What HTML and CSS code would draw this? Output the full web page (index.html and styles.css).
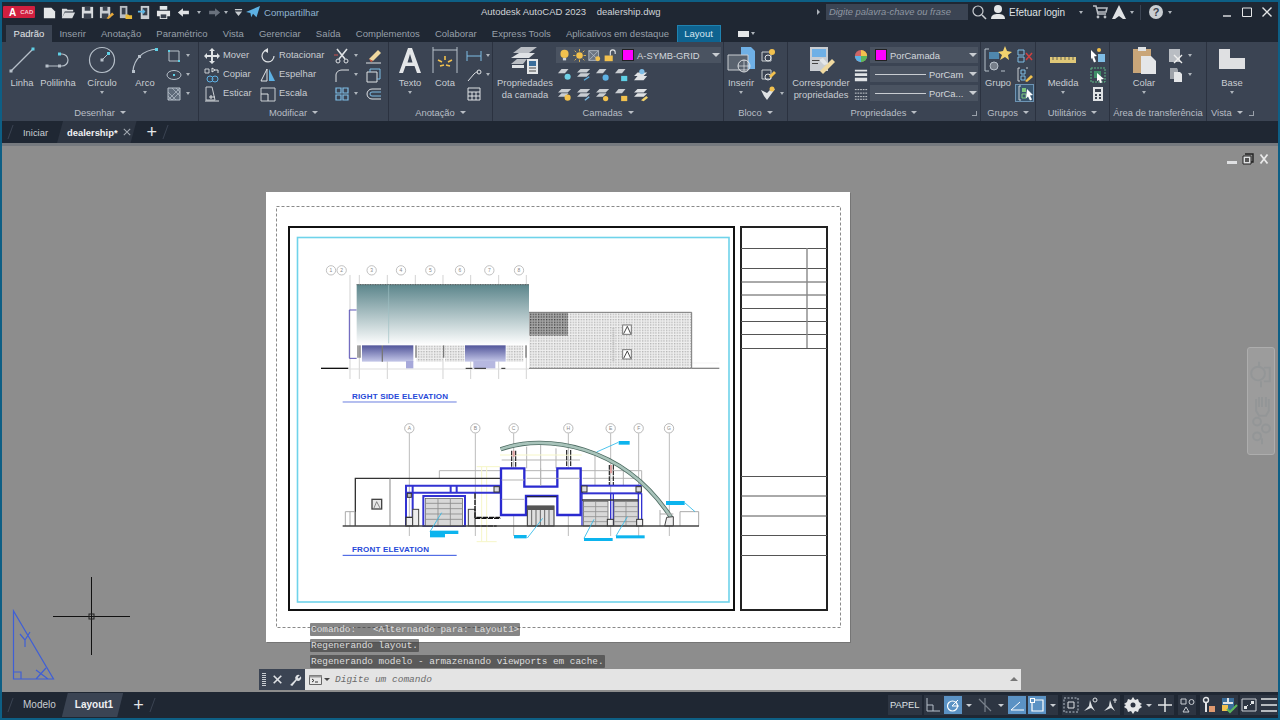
FILE: index.html
```html
<!DOCTYPE html>
<html lang="pt-BR">
<head>
    <meta charset="UTF-8">
    <title>Autodesk AutoCAD 2023 - dealership.dwg</title>
    <link rel="stylesheet" href="styles.css">
</head>
<body>
<div class="app">
    <!-- barra de titulo -->
    <div class="titlebar">
        <div class="logo"><b>A</b><span>CAD</span></div>
        <div class="quick">
            <svg class="ic" viewBox="0 0 16 16"><path d="M2 3h8l4 4v7H2z" fill="#e4e6e8"/></svg>
            <svg class="ic" viewBox="0 0 16 16"><path d="M1 4h5l1 1h6v2H4l-3 7zM4 8h11l-3 6H1z" fill="#d9dcdf"/></svg>
            <svg class="ic" viewBox="0 0 16 16"><path d="M2 2h12v12H2z" fill="#d9dcdf"/><path d="M5 2h6v4H5zM4 9h8v5H4z" fill="#39414e"/></svg>
            <svg class="ic" viewBox="0 0 16 16"><path d="M1 2h11v12H1z" fill="#c9cdd2"/><path d="M4 2h5v4H4zM3 9h7v5H3z" fill="#39414e"/><path d="M8 14l6-6 2 2-6 5z" fill="#e8a93a"/></svg>
            <svg class="ic" viewBox="0 0 16 16"><path d="M2 1h8v13H2z" fill="#b9bdc3"/><path d="M4 3h4v7H4z" fill="#39414e"/><path d="M8 10h3l1 1h3v4H8z" fill="#e8b93a"/></svg>
            <svg class="ic" viewBox="0 0 16 16"><path d="M4 1h9v14H4z" fill="#c9cdd2"/><path d="M6 3h5v8H6z" fill="#39414e"/><path d="M1 6h5V4l3 3-3 3V8H1z" fill="#5db7e6"/></svg>
            <svg class="ic" viewBox="0 0 16 16"><path d="M4 1h8v4H4zM1 6h14v6h-3v3H4v-3H1z" fill="#e4e6e8"/><path d="M5 10h6v4H5z" fill="#39414e"/></svg>
            <svg class="ic-wide" viewBox="0 0 20 12"><path d="M1 6l6-5v3h7v4H7v3z" fill="#dfe2e5"/></svg>
            <span class="dot"></span>
            <svg class="ic-wide dim" viewBox="0 0 20 12"><path d="M19 6l-6-5v3H6v4h7v3z" fill="#69717d"/></svg>
            <span class="dot"></span>
            <svg class="ic-tiny" viewBox="0 0 10 10"><path d="M1 1h8v1.6H1zM1 4h8L5 9z" fill="#c9cdd2"/></svg>
            <svg class="ic share" viewBox="0 0 16 16"><path d="M0 8L16 1l-4 13-4-4-2 4-1-5z" fill="#5db1e4"/></svg>
            <span class="share-text">Compartilhar</span>
        </div>
        <div class="app-title">Autodesk AutoCAD 2023 &nbsp;&nbsp; dealership.dwg</div>
        <div class="search-wrap">
            <span class="tri-right"></span>
            <div class="search">Digite palavra-chave ou frase</div>
            <svg class="ic" viewBox="0 0 16 16"><circle cx="7" cy="7" r="5" fill="none" stroke="#c9cdd2" stroke-width="1.2"/><path d="M11 11l4 4" stroke="#c9cdd2" stroke-width="1.6"/></svg>
            <svg class="ic user" viewBox="0 0 16 16"><circle cx="8" cy="5" r="4" fill="#e4e6e8"/><path d="M1 15c0-4 3-5 7-5s7 1 7 5z" fill="#e4e6e8"/></svg>
            <span class="login">Efetuar login</span>
            <span class="dot login-caret"></span>
            <svg class="ic cart" viewBox="0 0 16 16"><path d="M1 2h3l2 8h8M5 4h10l-1 4H6" fill="none" stroke="#b9bdc3" stroke-width="1.6"/><circle cx="6" cy="13" r="1.4" fill="#b9bdc3"/><circle cx="13" cy="13" r="1.4" fill="#b9bdc3"/></svg>
            <svg class="ic a360" viewBox="0 0 16 16"><path d="M8 1l7 14h-3l-4-3-4 3H1z" fill="#dfe2e5"/></svg>
            <span class="dot"></span>
            <span class="vsep"></span>
            <svg class="ic help" viewBox="0 0 16 16"><circle cx="8" cy="8" r="7" fill="#c9cdd2"/><text x="8" y="12" text-anchor="middle" font-size="11" font-weight="700" fill="#39414e">?</text></svg>
            <span class="dot"></span>
        </div>
        <div class="win-btns">
            <svg viewBox="0 0 12 12"><path d="M2 10h8" stroke="#e4e6e8" stroke-width="1.4"/></svg>
            <svg viewBox="0 0 12 12"><path d="M1.5 2h9v8.5h-9z" fill="none" stroke="#e4e6e8" stroke-width="1"/></svg>
            <svg viewBox="0 0 12 12"><path d="M1.5 1.5l9 9M10.5 1.5l-9 9" stroke="#e4e6e8" stroke-width="1.4"/></svg>
        </div>
    </div>

    <!-- abas da faixa de opcoes -->
    <div class="tabs">
        <div class="tab active">Padrão</div>
        <div class="tab">Inserir</div>
        <div class="tab">Anotação</div>
        <div class="tab">Paramétrico</div>
        <div class="tab">Vista</div>
        <div class="tab">Gerenciar</div>
        <div class="tab">Saída</div>
        <div class="tab">Complementos</div>
        <div class="tab">Colaborar</div>
        <div class="tab">Express Tools</div>
        <div class="tab">Aplicativos em destaque</div>
        <div class="tab contextual">Layout</div>
        <div class="tab-extra"><span></span><i class="dot"></i></div>
    </div>

    <!-- faixa de opcoes -->
    <div class="ribbon">
        <section class="panel p-draw">
            <div class="panel-body">
                <div class="big w36">
                    <svg class="big-ic" viewBox="0 0 28 28"><path d="M3 25L25 3" stroke="#b7c0ca" stroke-width="1.2"/><rect x="1.5" y="23.5" width="3" height="3" fill="#b7c0ca"/><rect x="23.5" y="1.5" width="3" height="3" fill="#5fd0e6"/></svg>
                    <span>Linha</span>
                </div>
                <div class="big w36">
                    <svg class="big-ic" viewBox="0 0 28 28"><path d="M3 20h15a6 6 0 0 0 0-12h-2" fill="none" stroke="#b7c0ca" stroke-width="1.2"/><rect x="1.5" y="18.5" width="3" height="3" fill="#b7c0ca"/><rect x="14" y="18.5" width="3" height="3" fill="#b7c0ca"/><rect x="14" y="6.5" width="3" height="3" fill="#5fd0e6"/></svg>
                    <span>Polilinha</span>
                </div>
                <div class="big w52">
                    <svg class="big-ic" viewBox="0 0 28 28"><circle cx="14" cy="14" r="12.5" fill="none" stroke="#b7c0ca" stroke-width="1.2"/><path d="M14 14l6-6" stroke="#b7c0ca"/><rect x="12.5" y="12.5" width="3" height="3" fill="#b7c0ca"/><rect x="19" y="6" width="3" height="3" fill="#5fd0e6"/></svg>
                    <span>Círculo</span><i class="dot"></i>
                </div>
                <div class="big w34">
                    <svg class="big-ic" viewBox="0 0 28 28"><path d="M2 25C3 13 12 4 26 3" fill="none" stroke="#b7c0ca" stroke-width="1.2"/><rect x="1" y="24" width="3" height="3" fill="#b7c0ca"/><rect x="7" y="9" width="3" height="3" fill="#b7c0ca"/><rect x="24" y="2" width="3" height="3" fill="#5fd0e6"/></svg>
                    <span>Arco</span><i class="dot"></i>
                </div>
                <div class="col col-draw">
                    <div class="small"><svg class="ic" viewBox="0 0 16 16"><path d="M3 3h10v10H3z" fill="none" stroke="#b7c0ca"/><path d="M2 2h2v2H2zM12 12h2v2h-2z" fill="#5fd0e6"/></svg><i class="dot"></i></div>
                    <div class="small"><svg class="ic" viewBox="0 0 16 16"><ellipse cx="8" cy="8" rx="7" ry="4.5" fill="none" stroke="#b7c0ca"/><path d="M7 7h2v2H7z" fill="#5fd0e6"/></svg><i class="dot"></i></div>
                    <div class="small"><svg class="ic" viewBox="0 0 16 16"><path d="M2 2h12v12H2z" fill="#5f6b7a" stroke="#b7c0ca"/><path d="M2 6l8 8M2 10l4 4M6 2l8 8M10 2l4 4M14 6l-8 8M14 2L2 14" stroke="#b7c0ca" stroke-width=".7"/></svg><i class="dot"></i></div>
                </div>
            </div>
            <div class="panel-foot">Desenhar <i class="caret"></i></div>
        </section>

        <section class="panel p-mod">
            <div class="panel-body">
                <div class="col col-mover">
                    <div class="small"><svg class="ic" viewBox="0 0 16 16"><path d="M8 0l3 3H9v4h4V5l3 3-3 3V9H9v4h2l-3 3-3-3h2V9H3v2L0 8l3-3v2h4V3H5z" fill="#dfe2e5"/></svg><span>Mover</span></div>
                    <div class="small"><svg class="ic" viewBox="0 0 16 16"><path d="M1 2h4v4H1z" fill="none" stroke="#c9cdd2"/><path d="M8 1l3 2-3 2zM11 3h3v3" fill="none" stroke="#dfe2e5"/><circle cx="6" cy="12" r="3" fill="none" stroke="#5db1e4"/><circle cx="11" cy="12" r="3" fill="none" stroke="#5db1e4"/></svg><span>Copiar</span></div>
                    <div class="small"><svg class="ic" viewBox="0 0 16 16"><path d="M2 1h6l3 13H2z" fill="none" stroke="#c9cdd2"/><path d="M1 15h14M7 9v4M5 11h6" stroke="#dfe2e5"/></svg><span>Esticar</span></div>
                </div>
                <div class="col col-rot">
                    <div class="small"><svg class="ic" viewBox="0 0 16 16"><path d="M7 2A6 6 0 1 0 14 8" fill="none" stroke="#dfe2e5" stroke-width="1.2"/><path d="M8 0v5L4 2.5z" fill="#dfe2e5"/></svg><span>Rotacionar</span></div>
                    <div class="small"><svg class="ic" viewBox="0 0 16 16"><path d="M7 2L1 14h6z" fill="none" stroke="#dfe2e5"/><path d="M9 2l6 12H9z" fill="#5db1e4"/></svg><span>Espelhar</span></div>
                    <div class="small"><svg class="ic" viewBox="0 0 16 16"><path d="M1 2h14v13H1z" fill="none" stroke="#c9cdd2"/><path d="M1 8h7v7" fill="none" stroke="#dfe2e5"/></svg><span>Escala</span></div>
                </div>
                <div class="col col-trim">
                    <div class="small"><svg class="ic" viewBox="0 0 16 16"><path d="M3 1l8 10M13 1L5 11" stroke="#dfe2e5" stroke-width="1.6"/><circle cx="4" cy="13" r="2" fill="none" stroke="#dfe2e5"/><circle cx="12" cy="13" r="2" fill="none" stroke="#dfe2e5"/><path d="M0 7h4" stroke="#d05050"/></svg><i class="dot"></i></div>
                    <div class="small"><svg class="ic" viewBox="0 0 16 16"><path d="M2 15V8c0-3 3-5 6-5h7" fill="none" stroke="#dfe2e5"/></svg><i class="dot"></i></div>
                    <div class="small"><svg class="ic" viewBox="0 0 16 16"><path d="M2 2h5v5H2zM9 2h5v5H9zM2 9h5v5H2zM9 9h5v5H9z" fill="none" stroke="#7fbde6" stroke-width="1.2"/></svg><i class="dot"></i></div>
                </div>
                <div class="col col-erase">
                    <div class="small"><svg class="ic" viewBox="0 0 16 16"><path d="M3 11L12 2l3 3-8 8z" fill="#f0d9a0"/><path d="M3 11l4 2-2 1z" fill="#e05a3a"/><path d="M0 15h15" stroke="#dfe2e5"/></svg></div>
                    <div class="small"><svg class="ic" viewBox="0 0 16 16"><path d="M1 5h10v10H1z" fill="none" stroke="#dfe2e5"/><path d="M4 5V2h10v10h-3" fill="none" stroke="#7fbde6"/></svg></div>
                    <div class="small"><svg class="ic" viewBox="0 0 16 16"><path d="M15 3H6a5 5 0 0 0 0 10h9" fill="none" stroke="#dfe2e5"/><path d="M15 6H6a2 2 0 0 0 0 4h9" fill="none" stroke="#7fbde6"/></svg></div>
                </div>
            </div>
            <div class="panel-foot">Modificar <i class="caret"></i></div>
        </section>

        <section class="panel p-note">
            <div class="panel-body">
                <div class="big w30 first-note">
                    <svg class="big-ic" viewBox="0 0 28 28"><path d="M12 2h4l9 25h-4l-2.5-7h-9L7 27H3zM11.5 16.500h5L14 8z" fill="#e4e6e8" fill-rule="evenodd"/></svg>
                    <span>Texto</span><i class="dot"></i>
                </div>
                <div class="big w40">
                    <svg class="big-ic" viewBox="0 0 28 28"><path d="M2 1v26M26 1v26M2 4h24" stroke="#b7c0ca" fill="none"/><path d="M7 14l4 2M9 20l4-1M21 14l-4 2M19 20l-4-1M14 10v4" stroke="#f2c14e" stroke-width="1.6"/></svg>
                    <span>Cota</span>
                </div>
                <div class="col">
                    <div class="small"><svg class="ic" viewBox="0 0 16 16"><path d="M1 3v10M15 3v10M1 8h14" stroke="#7fbde6"/></svg><i class="dot"></i></div>
                    <div class="small"><svg class="ic" viewBox="0 0 16 16"><path d="M2 14L8 7c2-2 3-2 4-2" fill="none" stroke="#dfe2e5"/><circle cx="13" cy="5" r="2" fill="none" stroke="#dfe2e5"/></svg><i class="dot"></i></div>
                    <div class="small"><svg class="ic" viewBox="0 0 16 16"><path d="M2 2h12v12H2zM2 6h12M2 10h12M6 6v8M10 6v8" fill="none" stroke="#dfe2e5"/></svg></div>
                </div>
            </div>
            <div class="panel-foot">Anotação <i class="caret"></i></div>
        </section>

        <section class="panel p-layer">
            <div class="panel-body">
                <div class="big w60">
                    <svg class="big-ic" viewBox="0 0 28 28"><path d="M10 1h16l-8 6H2z" fill="#b9bdc3"/><path d="M8 7h16l-6 5H0z" fill="#dfe2e5"/><path d="M6 13h10l-4 5H0z" fill="#b9bdc3"/><path d="M1 19h12v3H1z" fill="#dfe2e5"/><path d="M16 13h11v15H16z" fill="#e4e6e8"/><path d="M18 15h7v5h-7z" fill="#3a6d9a"/><path d="M18 22h7M18 25h7" stroke="#444"/></svg>
                    <span>Propriedades</span><span>da camada</span>
                </div>
                <div class="layers">
                    <div class="combo layer-combo">
                        <svg class="ic" viewBox="0 0 16 16"><circle cx="8" cy="6" r="5" fill="#f2c14e"/><path d="M6 11h4v3H6z" fill="#cfd3d8"/></svg>
                        <svg class="ic" viewBox="0 0 16 16"><circle cx="8" cy="8" r="4" fill="#f2c14e"/><path d="M8 0v3M8 13v3M0 8h3M13 8h3M2 2l2 2M12 12l2 2M14 2l-2 2M4 12l-2 2" stroke="#f2c14e"/></svg>
                        <svg class="ic" viewBox="0 0 16 16"><path d="M1 2h12v12H1z" fill="#6b7481" stroke="#b7c0ca"/><path d="M1 2l12 12M13 2L1 14" stroke="#b7c0ca"/><circle cx="12" cy="12" r="3" fill="#f2c14e"/></svg>
                        <svg class="ic" viewBox="0 0 16 16"><path d="M2 8h10v7H2z" fill="#f2c14e"/><path d="M9 8V4a3 3 0 0 1 6 0v2" fill="none" stroke="#dfe2e5" stroke-width="1.4"/></svg>
                        <span class="swatch"></span>
                        <span class="combo-text">A-SYMB-GRID</span>
                        <i class="tri"></i>
                    </div>
                    <div class="layer-icons">
                        <svg class="ic" viewBox="0 0 16 16"><path d="M4 1h8L8 6H0z" fill="#c9cdd2"/><circle cx="11" cy="10" r="3.5" fill="#6fd0e6"/></svg>
                        <svg class="ic" viewBox="0 0 16 16"><path d="M4 1h11l-4 4H0zM4 6h11l-4 4H0z" fill="#c9cdd2"/><path d="M8 14l6-4" stroke="#5db1e4" stroke-width="1.6"/></svg>
                        <svg class="ic" viewBox="0 0 16 16"><path d="M4 1h8L8 6H0z" fill="#c9cdd2"/><circle cx="11" cy="11" r="3.5" fill="#5db1e4"/></svg>
                        <svg class="ic" viewBox="0 0 16 16"><path d="M4 1h8L8 6H0z" fill="#c9cdd2"/><path d="M7 9h7v6H7z" fill="#5fd0e6"/></svg>
                        <svg class="ic" viewBox="0 0 16 16"><path d="M4 9h11l-4 5H0zM4 5h11l-4 4H0z" fill="#dfe2e5"/><circle cx="9" cy="4" r="3" fill="#7fbde6"/></svg>
                    </div>
                    <div class="layer-icons">
                        <svg class="ic" viewBox="0 0 16 16"><path d="M4 1h11l-4 4H0zM4 6h8L8 10H0z" fill="#c9cdd2"/><circle cx="11" cy="11" r="3.5" fill="#f2c14e"/></svg>
                        <svg class="ic" viewBox="0 0 16 16"><path d="M4 1h11l-4 4H0zM4 6h11l-4 4H0z" fill="#c9cdd2"/><path d="M9 14l5-4" stroke="#7fbde6" stroke-width="1.6"/></svg>
                        <svg class="ic" viewBox="0 0 16 16"><path d="M4 1h11l-4 4H0zM4 6h8L8 10H0z" fill="#c9cdd2"/><circle cx="11" cy="12" r="3" fill="#f2c14e"/></svg>
                        <svg class="ic" viewBox="0 0 16 16"><path d="M4 1h8L8 6H0z" fill="#c9cdd2"/><path d="M7 9h7v6H7z" fill="#f2c14e"/></svg>
                        <svg class="ic" viewBox="0 0 16 16"><path d="M4 1h11l-4 4H0zM4 6h11l-4 4H0z" fill="#dfe2e5"/><path d="M8 14l6-5 2 2-5 4z" fill="#f2d36e"/></svg>
                    </div>
                </div>
            </div>
            <div class="panel-foot">Camadas <i class="caret"></i></div>
        </section>

        <section class="panel p-block">
            <div class="panel-body">
                <div class="big w34">
                    <svg class="big-ic" viewBox="0 0 28 28"><path d="M14 1h10l4 4v18H14z" fill="#6fb0e6"/><path d="M1 9h20v15H1z" fill="#5a636f" stroke="#c9cdd2"/><circle cx="17" cy="20" r="6" fill="none" stroke="#dfe2e5"/><path d="M17 14v12M11 20h12" stroke="#dfe2e5" stroke-width=".7"/></svg>
                    <span>Inserir</span><i class="dot"></i>
                </div>
                <div class="col">
                    <div class="small"><svg class="ic" viewBox="0 0 16 16"><path d="M2 4h9v9H2z" fill="none" stroke="#c9cdd2"/><circle cx="8" cy="10" r="3" fill="none" stroke="#dfe2e5"/><circle cx="12" cy="4" r="3" fill="#f2c14e"/></svg></div>
                    <div class="small"><svg class="ic" viewBox="0 0 16 16"><path d="M2 3h9v9H2z" fill="none" stroke="#c9cdd2"/><circle cx="8" cy="10" r="3" fill="none" stroke="#dfe2e5"/><path d="M9 9l5-5 2 2-5 5z" fill="#f2c14e"/></svg></div>
                    <div class="small"><svg class="ic" viewBox="0 0 16 16"><path d="M1 4l3 6 3 4 8-11-5 1-3 3z" fill="#dfe2e5"/><circle cx="12" cy="3" r="2.5" fill="#f2c14e"/></svg><i class="dot"></i></div>
                </div>
            </div>
            <div class="panel-foot">Bloco <i class="caret"></i></div>
        </section>

        <section class="panel p-props">
            <div class="panel-body">
                <div class="big w58">
                    <svg class="big-ic" viewBox="0 0 28 28"><path d="M3 1h18v24H3z" fill="#c9cdd2"/><path d="M5 3h14v8H5z" fill="#6fb0e6"/><path d="M5 14h8v1H5zM5 17h6v1H5z" fill="#444"/><path d="M13 25l12-12 3 3-12 12z" fill="#f0d9a0"/><path d="M12 14l5 5 4-1-5-6z" fill="#e4e6e8"/></svg>
                    <span>Corresponder</span><span>propriedades</span>
                </div>
                <div class="col col-prop-ic">
                    <div class="small"><svg class="ic" viewBox="0 0 16 16"><circle cx="8" cy="8" r="7" fill="#c66"/><path d="M8 8V1a7 7 0 0 1 7 7z" fill="#f2c14e"/><path d="M8 8h7a7 7 0 0 1-7 7z" fill="#5cb85c"/><path d="M8 8v7a7 7 0 0 1-7-7z" fill="#5db1e4"/></svg></div>
                    <div class="small"><svg class="ic" viewBox="0 0 16 16"><path d="M1 2h14v2H1zM1 6h14v3H1zM1 11h14v4H1z" fill="#dfe2e5"/></svg></div>
                    <div class="small"><svg class="ic" viewBox="0 0 16 16"><path d="M1 3h14M1 7h14M1 11h14M1 14h14" stroke="#dfe2e5" stroke-dasharray="2 1"/></svg></div>
                </div>
                <div class="prop-combos">
                    <div class="combo"><span class="swatch"></span><span class="combo-text">PorCamada</span><i class="tri"></i></div>
                    <div class="combo"><span class="line-sample"></span><span class="combo-text">PorCam</span><i class="tri"></i></div>
                    <div class="combo"><span class="line-sample"></span><span class="combo-text">PorCa...</span><i class="tri"></i></div>
                </div>
            </div>
            <div class="panel-foot">Propriedades <i class="caret"></i><em class="launch"></em></div>
        </section>

        <section class="panel p-group">
            <div class="panel-body">
                <div class="big w32">
                    <svg class="big-ic" viewBox="0 0 28 28"><path d="M5 3H1v22h4M17 25h4" fill="none" stroke="#b7c0ca"/><path d="M5 6h10v7H5z" fill="#4f87ad"/><circle cx="10" cy="20" r="4" fill="#777f8a" stroke="#b7c0ca"/><path d="M21 0l2 5 5 1-4 3 1 5-4-3-5 3 2-5-4-3 5-1z" fill="#f2d36e"/></svg>
                    <span>Grupo</span>
                </div>
                <div class="col col-group">
                    <div class="small"><svg class="ic" viewBox="0 0 16 16"><path d="M1 2h6v5H1zM1 9h6v5H1z" fill="none" stroke="#7fbde6"/><path d="M9 5l6 7M15 5l-6 7" stroke="#d04040" stroke-width="1.5"/></svg></div>
                    <div class="small"><svg class="ic" viewBox="0 0 16 16"><path d="M3 1H1v13h2M9 1h2" fill="none" stroke="#c9cdd2"/><path d="M4 3h4v4H4zM4 9h4v4H4z" fill="none" stroke="#7fbde6"/><path d="M8 14l6-6 2 2-6 5z" fill="#f2c14e"/></svg></div>
                    <div class="small picked"><svg class="ic" viewBox="0 0 16 16"><path d="M3 1H1v14h2" fill="none" stroke="#c9cdd2"/><path d="M4 3h4v4H4z" fill="#7cc47c"/><path d="M4 9h4v4H4z" fill="none" stroke="#7cc47c"/><path d="M9 4l6 6-3 .5 2 4-2 1-2-4-2 2z" fill="#fff"/></svg></div>
                </div>
            </div>
            <div class="panel-foot">Grupos <i class="caret"></i></div>
        </section>

        <section class="panel p-util">
            <div class="panel-body">
                <div class="big w52">
                    <svg class="big-ic" viewBox="0 0 28 28"><path d="M1 11h26v6H1z" fill="#e0c878"/><path d="M4 11v3M8 11v3M12 11v3M16 11v3M20 11v3M24 11v3" stroke="#665"/></svg>
                    <span>Medida</span><i class="dot"></i>
                </div>
                <div class="col col-util">
                    <div class="small"><svg class="ic" viewBox="0 0 16 16"><path d="M1 2l6 6-3 .5 2 5-2 1-2-5-1 2z" fill="#fff"/><path d="M8 6h7v8H8z" fill="#7fbde6"/><circle cx="9" cy="2" r="2" fill="#f2c14e"/></svg></div>
                    <div class="small"><svg class="ic" viewBox="0 0 16 16"><path d="M1 1h14v14H1z" fill="none" stroke="#5cb885" stroke-dasharray="2 1"/><path d="M4 4h7v7H4z" fill="#3f8f68"/><path d="M7 6l7 6-3 .5 1 3-2 .5-1-3-2 1z" fill="#fff"/></svg></div>
                    <div class="small"><svg class="ic" viewBox="0 0 16 16"><path d="M3 1h10v14H3z" fill="#dfe2e5"/><path d="M5 3h6v3H5z" fill="#39414e"/><path d="M5 8h2v2H5zM9 8h2v2H9zM5 11h2v2H5zM9 11h2v2H9z" fill="#39414e"/></svg></div>
                </div>
            </div>
            <div class="panel-foot">Utilitários <i class="caret"></i></div>
        </section>

        <section class="panel p-clip">
            <div class="panel-body">
                <div class="big w44">
                    <svg class="big-ic" viewBox="0 0 28 28"><path d="M3 3h18v24H3z" fill="#c9a679"/><path d="M8 1h8v4H8z" fill="#dfe2e5"/><path d="M11 10h10l5 5v13H11z" fill="#e4e6e8"/></svg>
                    <span>Colar</span><i class="dot"></i>
                </div>
                <div class="col col-clip">
                    <div class="small"><svg class="ic" viewBox="0 0 16 16"><path d="M1 1h11v13H1z" fill="#b9bdc3"/><path d="M6 7l8 8M14 7l-8 8" stroke="#eee" stroke-width="1.4"/></svg><i class="dot"></i></div>
                    <div class="small"><svg class="ic" viewBox="0 0 16 16"><path d="M2 1h7l1 2v9H2z" fill="#9ea3aa"/><path d="M6 5h6l2 2v8H6z" fill="#e4e6e8"/></svg><i class="dot"></i></div>
                </div>
            </div>
            <div class="panel-foot">Área de transferência</div>
        </section>

        <section class="panel p-view">
            <div class="panel-body">
                <div class="big w50">
                    <svg class="big-ic" viewBox="0 0 28 28"><path d="M1 3h11v9h15v11H1z" fill="#dfe0e2"/></svg>
                    <span>Base</span><i class="dot"></i>
                </div>
            </div>
            <div class="panel-foot view-foot">Vista <i class="caret"></i><em class="launch view-launch"></em></div>
        </section>
    </div>

    <!-- abas de arquivo -->
    <div class="filetabs">
        <span class="slash"></span>
        <span class="ftab">Iniciar</span>
        <span class="ftab current">dealership* <svg class="close-x" viewBox="0 0 10 10"><path d="M1 1l8 8M9 1L1 9" stroke="#a3a9b1" stroke-width="1.3"/></svg></span>
        <span class="plus">+</span>
        <span class="slash"></span>
    </div>

    <!-- area de desenho -->
    <div class="canvas">
        <svg class="sheet" viewBox="2 143 1276 549" width="1276" height="549" font-family="Liberation Sans, sans-serif">
            <defs>
                <linearGradient id="roof" x1="0" y1="0" x2="0" y2="1">
                    <stop offset="0" stop-color="#5b858b"/>
                    <stop offset="1" stop-color="#ffffff"/>
                </linearGradient>
                <linearGradient id="glass" x1="0" y1="0" x2="0" y2="1">
                    <stop offset="0" stop-color="#4f5398"/>
                    <stop offset="1" stop-color="#c4c7e8"/>
                </linearGradient>
                <pattern id="brick" width="8" height="8" patternUnits="userSpaceOnUse">
                    <rect width="8" height="8" fill="#eeeeee"/>
                    <rect width="4" height="4" fill="#b4b4b4"/>
                </pattern>
                <pattern id="brickdark" width="8" height="8" patternUnits="userSpaceOnUse">
                    <rect width="8" height="8" fill="#a8a8a8"/>
                    <rect width="4" height="4" fill="#444"/>
                </pattern>
            </defs>

            <rect x="2" y="143" width="1276" height="3" fill="#767a7f"/>

            <!-- folha -->
            <rect x="267" y="193" width="584" height="450" fill="#757575"/>
            <rect x="266" y="192" width="584" height="450" fill="#fff"/>
            <rect x="276.5" y="206.5" width="564" height="421" fill="none" stroke="#8a8a8a" stroke-width="1" stroke-dasharray="3 2"/>
            <rect x="289" y="227" width="445" height="383" fill="none" stroke="#111" stroke-width="2"/>
            <rect x="297.5" y="237.5" width="431.5" height="364.5" fill="none" stroke="#6fd3ea" stroke-width="1.6"/>

            <!-- carimbo -->
            <rect x="741" y="227" width="86" height="383" fill="none" stroke="#222" stroke-width="2"/>
            <g stroke="#555" stroke-width="1">
                <path d="M741 248.5h86M741 268.5h86M741 282h86M741 295h86M741 308.5h86M741 321.5h86M741 334.5h86M741 348.5h86"/>
                <path d="M741 476.5h86M741 496h86M741 516h86M741 535.5h86M741 555.5h86"/>
            </g>
            <path d="M807 248v100" stroke="#888" stroke-width="1.4"/>

            <!-- elevacao lateral, coordenadas em escala 3x -->
            <g transform="translate(290 255) scale(.33333)">
                <g fill="#fff" stroke="#b5b5b5" stroke-width="2.5">
                    <circle cx="123" cy="46" r="14"/><circle cx="155" cy="46" r="14"/><circle cx="245" cy="46" r="14"/><circle cx="333" cy="46" r="14"/>
                    <circle cx="421" cy="46" r="14"/><circle cx="510" cy="46" r="14"/><circle cx="598" cy="46" r="14"/><circle cx="687" cy="46" r="14"/>
                </g>
                <g font-size="15" fill="#888" text-anchor="middle">
                    <text x="123" y="51">1</text><text x="155" y="51">2</text><text x="245" y="51">3</text><text x="333" y="51">4</text>
                    <text x="421" y="51">5</text><text x="510" y="51">6</text><text x="598" y="51">7</text><text x="687" y="51">8</text>
                </g>
                <path d="M180 60V372M208 60V372M292 60V372M376 60V90M459 60V372M542 60V372M626 60V372M709 60V372" stroke="#bdbdbd" stroke-width="2" fill="none"/>
                <path d="M200 165H178V310H200" fill="none" stroke="#5c54b8" stroke-width="3"/>
                <path d="M93 340H175" stroke="#111" stroke-width="4"/>
                <path d="M175 342H717" stroke="#ddd" stroke-width="3"/>
                <path d="M1205 340H1288" stroke="#888" stroke-width="4"/>
                <path d="M1205 324H1288" stroke="#eee" stroke-width="2"/>
                <rect x="216" y="270" width="154" height="50" fill="url(#glass)"/>
                <rect x="348" y="318" width="22" height="22" fill="#a6a8da"/>
                <rect x="525" y="270" width="122" height="50" fill="url(#glass)"/>
                <rect x="550" y="318" width="66" height="22" fill="#b6b8e0"/>
                <rect x="380" y="270" width="78" height="50" fill="url(#brick)"/>
                <rect x="465" y="270" width="58" height="50" fill="url(#brick)"/>
                <rect x="650" y="270" width="50" height="50" fill="url(#brick)"/>
                <path d="M527 340h20M553 340h35M634 340h12" stroke="#222" stroke-width="3"/>
                <path d="M204 270v38M210 270v38M378 270v38M461 270v38M708 270v38M277 270v50" stroke="#777" stroke-width="4"/>
                <rect x="200" y="88" width="517" height="183" fill="url(#roof)"/>
                <path d="M200 89H717" stroke="#555" stroke-width="3" stroke-dasharray="3 2"/>
                <path d="M296 90V265" stroke="#9fc0c4" stroke-width="2"/>
                <rect x="717" y="172" width="488" height="168" fill="url(#brick)"/>
                <rect x="717" y="172" width="117" height="70" fill="url(#brickdark)"/>
                <path d="M717 172H1205V340M717 340H1205" fill="none" stroke="#777" stroke-width="3"/>
                <path d="M970 220V320" stroke="#bbb" stroke-width="6" stroke-dasharray="3 3"/>
                <g fill="#fff" stroke="#777" stroke-width="3">
                    <rect x="998" y="210" width="26" height="28"/><rect x="998" y="284" width="26" height="28"/>
                </g>
                <path d="M1001 236L1012 214 1022 236M1001 310L1012 288 1022 310" fill="none" stroke="#444" stroke-width="3"/>
                <path d="M158 441H500" stroke="#6a7ee0" stroke-width="3"/>
            </g>
            <text x="352" y="398.500" font-size="8" font-weight="700" fill="#2548d8" textLength="96">RIGHT SIDE ELEVATION</text>

            <!-- elevacao frontal, coordenadas em escala 3x -->
            <g transform="translate(330 410) scale(.33333)">
                <path d="M238 70V378M436 70V378M551 70V378M715 70V378M842 70V378M926 70V378M1018 70V378" stroke="#bcbcbc" stroke-width="3"/>
                <g fill="#fff" stroke="#aaa" stroke-width="2.5">
                    <circle cx="238" cy="55" r="14"/><circle cx="436" cy="55" r="14"/><circle cx="551" cy="55" r="14"/><circle cx="715" cy="55" r="14"/>
                    <circle cx="842" cy="55" r="14"/><circle cx="926" cy="55" r="14"/><circle cx="1017" cy="55" r="14"/>
                </g>
                <g font-size="15" fill="#888" text-anchor="middle">
                    <text x="238" y="60">A</text><text x="436" y="60">B</text><text x="551" y="60">C</text><text x="715" y="60">H</text>
                    <text x="842" y="60">E</text><text x="926" y="60">F</text><text x="1017" y="60">G</text>
                </g>
                <path d="M328 205V182H935V225M590 110V175M632 105V230M678 115V175M795 128V225M880 170V225M515 150H750M758 205H920" fill="none" stroke="#b5b5b5" stroke-width="3"/>
                <path d="M455 170V395M470 170V395M440 170H510M510 135H755M510 255H590M440 395H500" fill="none" stroke="#f6f6c8" stroke-width="3"/>
                <path d="M545 122V175M557 122V175M710 120V172M722 120V172M838 165V225M850 165V225" stroke="#222" stroke-width="3.5" stroke-dasharray="14 3"/>
                <path d="M551 122V140M843 165V190" stroke="#e0a0a0" stroke-width="6"/>
                <path d="M76 348V205H510" fill="none" stroke="#333" stroke-width="4"/>
                <path d="M180 205V348" stroke="#888" stroke-width="3"/>
                <rect x="126" y="268" width="29" height="29" fill="#e8e8e8" stroke="#444" stroke-width="4"/>
                <path d="M132 294L140 275 150 294" fill="none" stroke="#555" stroke-width="2"/>
                <path d="M46 348V305H75V348M60 305V348" fill="none" stroke="#aaa" stroke-width="3"/>
                <path d="M228 227H510V248H228zM228 227V348M248 227V348M362 227V248M380 227V248" fill="none" stroke="#3232d2" stroke-width="6"/>
                <rect x="232" y="250" width="12" height="12" fill="#bbb" stroke="#333" stroke-width="3"/>
                <rect x="228" y="322" width="20" height="26" fill="#eee" stroke="#333" stroke-width="4"/>
                <rect x="248" y="298" width="18" height="50" fill="#eee" stroke="#444" stroke-width="3"/>
                <rect x="415" y="298" width="20" height="50" fill="#eee" stroke="#444" stroke-width="3"/>
                <rect x="492" y="230" width="16" height="16" fill="#ddd" stroke="#333" stroke-width="3"/>
                <rect x="280" y="258" width="125" height="90" fill="none" stroke="#3232d2" stroke-width="6"/>
                <rect x="287" y="265" width="111" height="83" fill="#d8d8d8" stroke="#555" stroke-width="2"/>
                <path d="M287 280H398M287 296H398M287 312H398M287 328H398M324 265V348M361 265V348" stroke="#8a8a8a" stroke-width="2.5"/>
                <path d="M435 250V322H510M435 325H512M435 348H500" fill="none" stroke="#111" stroke-width="4" stroke-dasharray="16 3"/>
                <path d="M513 175H583V230H682V175H752V315H682V258H588V315H513Z" fill="#fff" stroke="#2a2ad0" stroke-width="7"/>
                <path d="M515 210H583M515 268H583M590 205H680M632 175V228M682 205H750" fill="none" stroke="#b5b5b5" stroke-width="3"/>
                <path d="M590 260H680" stroke="#222" stroke-width="3"/>
                <rect x="592" y="288" width="80" height="60" fill="#e0e0e0" stroke="#333" stroke-width="3"/>
                <rect x="592" y="288" width="80" height="12" fill="#555"/>
                <path d="M605 300V348M618 300V348M631 300V348M644 300V348M657 300V348" stroke="#666" stroke-width="3"/>
                <rect x="756" y="227" width="176" height="23" fill="none" stroke="#3232d2" stroke-width="6"/>
                <path d="M756 227V348M842 250V348M850 250V348M925 227V348M935 250V348" stroke="#3232d2" stroke-width="4"/>
                <path d="M756 270H925" stroke="#333" stroke-width="5"/>
                <rect x="760" y="275" width="74" height="73" fill="#d8d8d8" stroke="#555" stroke-width="2"/>
                <rect x="852" y="275" width="72" height="73" fill="#d8d8d8" stroke="#555" stroke-width="2"/>
                <path d="M760 290H834M760 305H834M760 320H834M760 335H834M852 290H924M852 305H924M852 320H924M852 335H924M797 275V348M888 275V348" stroke="#909090" stroke-width="2.5"/>
                <rect x="755" y="228" width="16" height="18" fill="#ddd" stroke="#333" stroke-width="3"/>
                <rect x="918" y="230" width="16" height="16" fill="#ddd" stroke="#333" stroke-width="3"/>
                <rect x="832" y="328" width="18" height="20" fill="#eee" stroke="#333" stroke-width="3"/>
                <rect x="920" y="328" width="18" height="20" fill="#eee" stroke="#333" stroke-width="3"/>
                <path d="M512 118C640 70 880 100 1025 325" fill="none" stroke="#4d6b62" stroke-width="13"/>
                <path d="M512 118C640 70 880 100 1025 325" fill="none" stroke="#a9c4bb" stroke-width="8"/>
                <path d="M990 348V300M990 312H1030M1050 348V305H1106V348" fill="none" stroke="#aaa" stroke-width="3"/>
                <path d="M1004 348L1010 322 1030 320V348z" fill="#eee" stroke="#444" stroke-width="3"/>
                <path d="M38 348H1107" stroke="#444" stroke-width="4"/>
                <g fill="#0cb4ee">
                    <rect x="866" y="93" width="33" height="11"/><rect x="1008" y="273" width="56" height="12"/>
                    <rect x="300" y="362" width="85" height="10"/><rect x="300" y="372" width="45" height="10"/>
                    <rect x="552" y="375" width="38" height="10"/><rect x="762" y="384" width="86" height="9"/><rect x="858" y="376" width="86" height="9"/>
                </g>
                <path d="M865 97L800 126M1064 278L1095 305M300 365L335 308M592 384L638 325M762 385L792 328M858 378L892 320" fill="none" stroke="#2ab8e8" stroke-width="2.5"/>
                <path d="M38 436H380" stroke="#3050e0" stroke-width="3"/>
            </g>
            <text x="352" y="552" font-size="8" font-weight="700" fill="#2548d8" textLength="77">FRONT ELEVATION</text>

            <!-- icone UCS -->
            <path d="M13.5 611V679H53.5ZM14 672H21V679M20 634L25 640V647M30 632L25 640M36 670L48 679M36 679L46 668" fill="none" stroke="#3f5fd6" stroke-width="1.2"/>

            <!-- cursor -->
            <path d="M53 616.5H130M91.5 577V655" stroke="#111" stroke-width="1"/>
            <rect x="89" y="614" width="5" height="5" fill="none" stroke="#222"/>
        </svg>

        <div class="vp-btns">
            <svg viewBox="0 0 12 12"><path d="M1 8h10v3H1z" fill="#dfe0e2"/></svg>
            <svg viewBox="0 0 12 12"><path d="M3 1h8v8H9" fill="none" stroke="#222" stroke-width="1.4"/><path d="M1 3h8v8H1z" fill="#dfe0e2" stroke="#222"/><path d="M3 5h4v4H3z" fill="#555"/></svg>
            <svg viewBox="0 0 12 12"><path d="M2.5 1.5l7 9M9.5 1.5l-7 9" stroke="#e8e8e8" stroke-width="1.8"/></svg>
        </div>

        <div class="navbar">
            <svg viewBox="0 0 26 108"><g fill="none" stroke="#8a8f93" stroke-width="2"><circle cx="10" cy="26" r="7"/><path d="M16 20h6v14h-6M11 14v6M13 34v6"/><path d="M8 52v12l3 5h7l3-5V52M11 50v10M14 50v10M18 50v10"/><circle cx="9" cy="75" r="4"/><circle cx="18" cy="82" r="4"/><circle cx="9" cy="90" r="4"/><path d="M14 92v6"/></g></svg>
        </div>

        <div class="history">
            <div class="hline">Comando:   &lt;Alternando para: Layout1&gt;</div>
            <div class="hline">Regenerando layout.</div>
            <div class="hline">Regenerando modelo - armazenando viewports em cache.</div>
        </div>

        <div class="cmdbar">
            <div class="cmd-tools">
                <span class="grip"></span>
                <svg viewBox="0 0 12 12"><path d="M2.5 2.5l7 7M9.5 2.5l-7 7" stroke="#dfe2e5" stroke-width="1.5"/></svg>
                <svg viewBox="0 0 12 12"><path d="M1 11l5-5a3 3 0 0 1 4-4L8 4l1 1 2-2a3 3 0 0 1-4 4l-4 5z" fill="#dfe2e5"/></svg>
            </div>
            <div class="cmd-input">
                <svg class="prompt" viewBox="0 0 14 12"><path d="M.5 1.5h12v9H.5z" fill="#e8e8e8" stroke="#666"/><path d="M.5 1.5h12v2H.5z" fill="#999"/><path d="M3 5l2 1.5L3 8M6 8h3" stroke="#333" fill="none"/></svg>
                <i class="tri dark"></i>
                <span class="cmd-hint">Digite um comando</span>
                <i class="tri-up"></i>
            </div>
        </div>
    </div>

    <!-- barra de status -->
    <div class="statusbar">
        <span class="slash"></span>
        <span class="ltab">Modelo</span>
        <span class="ltab current">Layout1</span>
        <span class="plus">+</span>
        <span class="slash"></span>
        <div class="status-right">
            <span class="paper">PAPEL</span>
            <div class="sgroup">
                <svg class="st" viewBox="0 0 18 18"><path d="M3 2v13h13M3 9h6v6" fill="none" stroke="#b7c0ca"/></svg>
                <svg class="st on" viewBox="0 0 18 18"><circle cx="8.5" cy="10" r="5" fill="none" stroke="#fff" stroke-width="1.2"/><path d="M8 10h7M8 10l6-6" stroke="#fff"/></svg>
                <i class="tri"></i>
                <svg class="st dimmed" viewBox="0 0 18 18"><path d="M3 3l12 12M9 2v14" stroke="#79818c" stroke-width="1.2"/></svg>
                <i class="tri"></i>
                <svg class="st on" viewBox="0 0 18 18"><path d="M3 14h13M3 14l9-8" stroke="#fff" fill="none"/></svg>
                <svg class="st on" viewBox="0 0 18 18"><path d="M5 4h10v11H4V6" fill="none" stroke="#fff" stroke-width="1.2"/><rect x="2.5" y="2.5" width="4" height="4" fill="#5b92c4" stroke="#fff"/></svg>
                <i class="tri"></i>
            </div>
            <div class="sgroup">
                <svg class="st" viewBox="0 0 18 18"><path d="M2 2h14v14H2z" fill="none" stroke="#b7c0ca" stroke-dasharray="2 1.5"/><path d="M6 6h6v6H6z" fill="none" stroke="#dfe2e5"/></svg>
                <svg class="st" viewBox="0 0 18 18"><path d="M2 15l5-5 1-6 2 6 3 5-4-3z" fill="#dfe2e5"/><circle cx="13" cy="4" r="2" fill="none" stroke="#dfe2e5"/></svg>
                <svg class="st" viewBox="0 0 18 18"><path d="M2 15l5-5 1-6 2 6 3 5-4-3z" fill="#dfe2e5"/><path d="M13 2v5M11 4h4" stroke="#dfe2e5"/></svg>
            </div>
            <div class="sgroup">
                <svg class="st" viewBox="0 0 18 18"><path d="M9 1l2 3 3-1 1 3 3 2-2 1 2 2-3 2-1 3-3-1-2 3-2-3-3 1-1-3-3-2 2-2-2-1 3-2 1-3 3 1z" fill="#e4e6e8"/><circle cx="9" cy="9" r="2.5" fill="#2b3341"/></svg>
                <i class="tri"></i>
                <svg class="st" viewBox="0 0 18 18"><path d="M9 2v14M2 9h14" stroke="#e4e6e8" stroke-width="1.5"/></svg>
            </div>
            <div class="sgroup">
                <svg class="st" viewBox="0 0 18 18"><path d="M3 3h5v5H3z" fill="none" stroke="#c9cdd2"/><circle cx="13.5" cy="6" r="2.5" fill="none" stroke="#c9cdd2"/><path d="M8 11l3 5H5z" fill="none" stroke="#c9cdd2"/></svg>
            </div>
            <div class="sgroup">
                <svg class="st" viewBox="0 0 18 18"><circle cx="6" cy="4" r="2.5" fill="none" stroke="#e4e6e8" stroke-width="1.4"/><path d="M6 7v9" stroke="#e4e6e8" stroke-width="2"/><rect x="9" y="10" width="6" height="6" fill="#e09a70"/></svg>
                <svg class="st" viewBox="0 0 18 18"><path d="M2 2h12v12H2z" fill="#3a6d9a"/><path d="M8 2v4M3 7h10" stroke="#dfe2e5" stroke-width="2"/><path d="M2 9h6v6H2z" fill="#f2c14e"/><path d="M7 13l3 3 7-7" fill="none" stroke="#5cb85c" stroke-width="2"/></svg>
            </div>
            <div class="sgroup">
                <svg class="st" viewBox="0 0 18 18"><path d="M2 3h14v12H2z" fill="none" stroke="#c9cdd2"/><path d="M5 12l3-3M13 6l-3 3" stroke="#e4e6e8"/><path d="M4 10h3v3H4zM11 5h3v3h-3z" fill="#e4e6e8"/></svg>
                <svg class="st menu" viewBox="0 0 18 18"><path d="M1 3h16M1 9h16M1 15h16" stroke="#e4e6e8" stroke-width="1.6"/></svg>
            </div>
        </div>
    </div>
</div>
</body>
</html>
```

FILE: styles.css
```css
* {
    margin: 0;
    padding: 0;
    box-sizing: border-box;
}

body {
    width: 1280px;
    height: 720px;
    overflow: hidden;
    font-family: "Liberation Sans", Arial, sans-serif;
    font-size: 9.4px;
    color: #c9cdd2;
    background-color: #1f2733;
}

.app {
    display: flex;
    flex-direction: column;
    height: 720px;
    border: 2px solid #0d5f85;
}

svg {
    display: block;
    flex: none;
}

.ic {
    width: 16px;
    height: 16px;
}

.dot {
    display: block;
    width: 0;
    height: 0;
    border: 2px solid transparent;
    border-top: 3px solid #aeb4bb;
    border-bottom: 0;
}

.tri {
    display: block;
    width: 0;
    height: 0;
    border: 4px solid transparent;
    border-top: 4px solid #c9cdd2;
    border-bottom: 0;
}

/* barra de titulo */
.titlebar {
    display: flex;
    align-items: center;
    height: 20px;
    background-color: #1f2733;
    position: relative;
}

.logo {
    display: flex;
    align-items: center;
    width: 32px;
    height: 12px;
    margin-left: 1px;
    padding-left: 6px;
    background-color: #d11f3f;
    color: #fff;
    border-radius: 1px;
}

.logo b {
    font-size: 10px;
}

.logo span {
    margin-left: 4px;
    font-size: 6px;
    font-weight: 700;
    color: #f5c8d0;
}

.quick {
    display: flex;
    align-items: center;
    gap: 3px;
    margin-left: 7px;
}

.quick .ic {
    width: 15px;
    height: 15px;
    margin-right: 1px;
}

.ic-wide {
    width: 17px;
    height: 11px;
    margin-left: 2px;
}

.ic-wide.dim {
    margin-left: 0;
}

.ic-tiny {
    width: 9px;
    height: 9px;
    margin-left: 3px;
}

.quick .share {
    width: 14px;
    height: 14px;
}

.share-text {
    font-size: 9.6px;
    color: #8fb4d0;
}

.app-title {
    position: absolute;
    left: 479px;
    top: 3px;
    font-size: 9.5px;
    line-height: 13px;
    color: #cfd3d8;
}

.search-wrap {
    position: absolute;
    left: 815px;
    top: 2px;
    display: flex;
    align-items: center;
    height: 16px;
}

.tri-right {
    width: 0;
    height: 0;
    border: 3px solid transparent;
    border-left: 3px solid #aeb4bb;
    border-right: 0;
}

.search {
    width: 142px;
    height: 16px;
    margin: 0 3px 0 6px;
    padding-left: 3px;
    background-color: #3b4453;
    font-size: 9.4px;
    font-style: italic;
    line-height: 16px;
    color: #8f97a2;
}

.user {
    margin-left: 3px;
}

.login {
    margin-left: 3px;
    font-size: 10px;
    color: #dfe2e5;
}

.login-caret {
    margin-left: 14px;
}

.cart {
    margin-left: 9px;
}

.a360 {
    margin: 0 3px;
}

.vsep {
    width: 1px;
    height: 15px;
    margin: 0 6px;
    background-color: #3b4453;
}

.help {
    margin-right: 4px;
    margin-left: 1px;
}

.win-btns {
    position: absolute;
    right: 5px;
    top: 4px;
    display: flex;
    gap: 8px;
}

.win-btns svg {
    width: 12px;
    height: 12px;
}

/* abas */
.tabs {
    display: flex;
    align-items: flex-end;
    height: 20px;
    padding-left: 4px;
    background-color: #1f2733;
    font-size: 9.5px;
}

.tab {
    height: 17px;
    padding: 0 7.6px;
    line-height: 17px;
    color: #98a0aa;
}

.tab.active {
    background-color: #3b4453;
    color: #e4e6e8;
}

.tab.contextual {
    width: 44px;
    padding: 0;
    text-align: center;
    background-color: #0e6390;
    border: 1px solid #1f82b0;
    border-bottom: 0;
    color: #d5e6f0;
    line-height: 15px;
}

.tab-extra {
    display: flex;
    align-items: center;
    gap: 2px;
    height: 17px;
    margin-left: 17px;
}

.tab-extra span {
    width: 11px;
    height: 6px;
    background-color: #e4e6e8;
}

/* faixa de opcoes */
.ribbon {
    display: flex;
    height: 79px;
    background-color: #3b4453;
}

.panel {
    position: relative;
    flex: none;
    display: flex;
    flex-direction: column;
    border-right: 1px solid #2b3240;
}

.p-draw { width: 197px; }
.p-mod { width: 190px; }
.p-note { width: 104px; }
.p-layer { width: 231px; }
.p-block { width: 64px; }
.p-props { width: 193px; }
.p-group { width: 55px; }
.p-util { width: 74px; }
.p-clip { width: 97px; }
.p-view { flex: 1; border-right: 0; }

.panel-body {
    flex: 1;
    display: flex;
    padding-top: 4px;
}

.panel-foot {
    display: flex;
    justify-content: center;
    align-items: center;
    gap: 5px;
    height: 17px;
    padding-bottom: 1px;
    color: #b9bec5;
    white-space: nowrap;
}

.view-foot {
    justify-content: flex-start;
    padding-left: 4px;
}

.caret {
    display: block;
    width: 0;
    height: 0;
    border: 3.5px solid transparent;
    border-top: 3.5px solid #b9bec5;
    border-bottom: 0;
}

.launch {
    position: absolute;
    right: 3px;
    bottom: 5px;
    width: 5px;
    height: 5px;
    border: solid #9aa1aa;
    border-width: 0 1px 1px 0;
}

.view-launch {
    right: 24px;
}

.big {
    display: flex;
    flex-direction: column;
    align-items: center;
    flex: none;
    line-height: 12px;
    color: #c9cdd2;
    white-space: nowrap;
}

.big span {
    height: 12px;
}

.big .dot {
    margin-top: 2px;
}

.big-ic {
    width: 28px;
    height: 28px;
    margin-bottom: 3px;
}

.w30 { width: 30px; }
.w32 { width: 32px; }
.w34 { width: 34px; }
.w36 { width: 36px; }
.w40 { width: 40px; }
.w44 { width: 44px; }
.w50 { width: 50px; }
.w52 { width: 52px; }
.w58 { width: 58px; }
.w60 { width: 60px; }

.col {
    display: flex;
    flex-direction: column;
}

.small {
    display: flex;
    align-items: center;
    gap: 3px;
    height: 19px;
    color: #c9cdd2;
}

.small span {
    margin-bottom: 2px;
}

.small .dot {
    margin-left: 1px;
}

.p-draw .big:first-child { margin-left: 2px; }
.col-draw { margin-left: 4px; }

.col-mover { width: 56px; margin-left: 5px; }
.col-rot { width: 74px; }
.col-trim { width: 32px; }

.first-note { margin-left: 6px; }
.p-note .col { margin-left: 1px; }

.p-layer .big { margin-left: 2px; }

.layers {
    display: flex;
    flex-direction: column;
    width: 165px;
    margin-left: 1px;
}

.combo {
    display: flex;
    align-items: center;
    height: 16px;
    padding-left: 3px;
    background-color: #4a5361;
    color: #d3d7dc;
    position: relative;
}

.combo .tri {
    position: absolute;
    right: 1px;
    top: 6px;
}

.combo-text {
    margin-left: 3px;
}

.layer-combo {
    padding-left: 1px;
    margin-top: 1px;
}

.layer-combo .ic {
    width: 13px;
    height: 13px;
    margin-left: 1px;
    margin-right: 1px;
}

.layer-combo .swatch {
    margin-left: 5px;
}

.swatch {
    width: 12px;
    height: 12px;
    margin-left: 2px;
    background-color: #ff00ff;
    border: 1px solid #222;
}

.layer-icons {
    display: flex;
    gap: 5px;
    height: 20px;
    padding: 5px 0 0 2px;
}

.layer-icons .ic {
    width: 14px;
    height: 14px;
}

.p-block .col { margin-left: 2px; }

.p-props .big { margin-left: 4px; }

.col-prop-ic {
    margin-left: 4px;
}

.col-prop-ic .ic {
    width: 14px;
    height: 14px;
}

.prop-combos {
    display: flex;
    flex-direction: column;
    gap: 3px;
    width: 108px;
    margin: 1px 0 0 2px;
}

.line-sample {
    display: block;
    width: 51px;
    height: 1px;
    margin-left: 2px;
    background-color: #c9cdd2;
}

.p-group .big { margin-left: 1px; }
.col-group { margin-left: 3px; }

.picked {
    width: 19px;
    height: 18px;
    margin-left: -2px;
    padding-left: 2px;
    background-color: #39566f;
    border: 1px solid #6d94b4;
}

.p-util .big { margin-left: 1px; }
.col-util { margin-left: 1px; }

.p-clip .big { margin-left: 12px; }
.col-clip { margin-left: 2px; }

/* abas de arquivo */
.filetabs {
    display: flex;
    align-items: center;
    height: 22px;
    background-color: #1f2733;
    padding-left: 8px;
}

.slash {
    display: block;
    width: 1px;
    height: 14px;
    background-color: #3b4453;
    transform: skewX(-20deg);
}

.ftab {
    display: flex;
    align-items: center;
    height: 22px;
    margin-left: 12px;
    color: #c9cdd2;
}

.ftab.current {
    margin-left: 9px;
    padding: 0 6px 0 10px;
    background-color: #2d3542;
    color: #f0f1f3;
    font-weight: 700;
    clip-path: polygon(6px 0, 100% 0, calc(100% - 6px) 100%, 0 100%);
}

.close-x {
    width: 8px;
    height: 8px;
    margin-left: 5px;
}

.plus {
    margin: 0 8px 0 10px;
    font-size: 18px;
    line-height: 20px;
    color: #e4e6e8;
}

/* area de desenho */
.canvas {
    position: relative;
    flex: 1;
    background-color: #8d8d8d;
    overflow: hidden;
}

.sheet {
    position: absolute;
    left: 0;
    top: 0;
}

.vp-btns {
    position: absolute;
    right: 8px;
    top: 10px;
    display: flex;
    gap: 4px;
}

.vp-btns svg {
    width: 12px;
    height: 12px;
}

.navbar {
    position: absolute;
    left: 1245px;
    top: 204px;
    width: 28px;
    height: 108px;
    background-color: #9c9c9c;
    border: 1px solid #adadad;
    border-radius: 3px;
}

.navbar svg {
    width: 26px;
    height: 106px;
    opacity: .45;
}

.history {
    position: absolute;
    left: 308px;
    top: 480px;
    display: flex;
    flex-direction: column;
    align-items: flex-start;
    gap: 3px;
}

.hline {
    height: 13px;
    padding: 0 1px;
    background-color: rgba(60, 60, 60, .62);
    font-family: "Liberation Mono", monospace;
    font-size: 9.4px;
    line-height: 13px;
    color: #dedede;
    white-space: pre;
    border-radius: 1px;
}

.cmdbar {
    position: absolute;
    left: 257px;
    top: 526px;
    display: flex;
    width: 762px;
    height: 21px;
}

.cmd-tools {
    display: flex;
    align-items: center;
    gap: 5px;
    width: 46px;
    padding-left: 3px;
    background-color: #3b4453;
}

.cmd-tools svg {
    width: 13px;
    height: 13px;
}

.grip {
    width: 4px;
    height: 14px;
    background: repeating-linear-gradient(#c9cdd2 0 1px, transparent 1px 2px);
}

.cmd-input {
    position: relative;
    flex: 1;
    display: flex;
    align-items: center;
    padding-left: 4px;
    background-color: #e4e4e4;
}

.prompt {
    width: 14px;
    height: 12px;
}

.tri.dark {
    margin-left: 1px;
    border-width: 3px;
    border-top-color: #444;
}

.cmd-hint {
    margin-left: 5px;
    font-family: "Liberation Mono", monospace;
    font-size: 9.5px;
    font-style: italic;
    color: #6b6b6b;
}

.tri-up {
    position: absolute;
    right: 3px;
    top: 8px;
    width: 0;
    height: 0;
    border: 4px solid transparent;
    border-bottom: 4px solid #777;
    border-top: 0;
}

/* barra de status */
.statusbar {
    position: relative;
    display: flex;
    align-items: center;
    height: 26px;
    padding-left: 8px;
    background-color: #1f2733;
}

.ltab {
    margin-left: 12px;
    font-size: 10px;
    color: #c9cdd2;
    line-height: 24px;
}

.ltab.current {
    margin-left: 6px;
    padding: 0 10px 0 13px;
    background-color: #3b4453;
    color: #f0f1f3;
    font-weight: 700;
    clip-path: polygon(6px 0, 100% 0, calc(100% - 6px) 100%, 0 100%);
}

.status-right {
    position: absolute;
    left: 886px;
    top: 3px;
    display: flex;
    align-items: center;
    gap: 2px;
    height: 20px;
}

.paper {
    padding: 0 2px;
    height: 20px;
    line-height: 20px;
    background-color: #2d3542;
    color: #dfe2e5;
}

.sgroup {
    display: flex;
    align-items: center;
    gap: 2px;
    height: 20px;
    background-color: #2d3542;
    margin-left: 2px;
}

.sgroup:first-of-type,
.sgroup:last-child {
    margin-left: 0;
}

.sgroup .tri {
    border-width: 3px;
    border-top-color: #c9cdd2;
    margin: 0 2px;
}

.st {
    width: 18px;
    height: 18px;
}

.st.on {
    background-color: #5b92c4;
}
```
